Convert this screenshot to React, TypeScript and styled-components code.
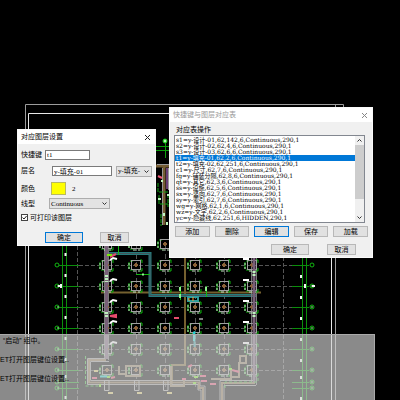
import React, { useState } from "react";
import styled, { createGlobalStyle } from "styled-components";

const GlobalStyle = createGlobalStyle`
  * { box-sizing: border-box; }
  body {
    margin: 0;
    background: #000;
    color: #000;
    font: 7px/8px "Liberation Serif", "Noto Sans CJK SC", serif;
  }
  button, input, select { font: inherit; color: inherit; margin: 0; }
`;

const Desktop = styled.main`
  position: relative;
  min-height: 100vh;
  overflow: hidden;
  background: #000;
`;

const Drawing = styled.svg`
  position: absolute;
  left: 0;
  top: 0;
`;

const CommandLog = styled.section`
  position: absolute;
  left: 0;
  right: 25px;
  top: 334px;
  bottom: 0;
  overflow: hidden;
  display: flex;
  flex-direction: column;
  gap: 11px;
  padding-top: 2px;
  background: rgba(209, 209, 209, 0.66);
  border-top: 1px solid #aaa;
  border-right: 1px solid #aaa;
  color: #000;
  font-family: "Liberation Sans", "Noto Sans CJK SC", sans-serif;
`;

const LogLine = styled.p<{ $indent?: boolean }>`
  margin: 0;
  padding-left: ${(p) => (p.$indent ? 3 : 0)}px;
  white-space: pre;
`;

const Window = styled.section<{ $x: number; $y: number; $width: number }>`
  position: absolute;
  left: ${(p) => p.$x}px;
  top: ${(p) => p.$y}px;
  width: ${(p) => p.$width}px;
  background: #f0f0f0;
  border: 1px solid #fafafa;
`;

const TitleBar = styled.header<{ $inactive?: boolean }>`
  display: flex;
  align-items: center;
  justify-content: space-between;
  height: 14px;
  padding: 0 4px 0 3px;
  background: #fff;
  color: ${(p) => (p.$inactive ? "#999" : "#000")};
`;

const Title = styled.h1`
  margin: 0;
  font-size: 7px;
  font-weight: 400;
`;

const CloseButton = styled.button`
  display: flex;
  padding: 0;
  border: 0;
  background: none;
`;

const Form = styled.form`
  display: flex;
  flex-direction: column;
  padding: 6px 4px 2px 3px;
`;

const Field = styled.div<{ $labelWidth: number; $height: number }>`
  display: grid;
  grid-template-columns: ${(p) => p.$labelWidth}px 1fr;
  align-items: center;
  height: ${(p) => p.$height}px;
`;

const Controls = styled.div`
  display: flex;
  align-items: center;
  gap: 4px;
`;

const TextBox = styled.input<{ $width: number }>`
  width: ${(p) => p.$width}px;
  height: 10px;
  padding: 0 1px;
  border: 1px solid #7a7a7a;
  background: #fff;
`;

const SelectFrame = styled.span<{ $width: number }>`
  position: relative;
  display: flex;
  width: ${(p) => p.$width}px;
  svg { position: absolute; right: 3px; top: 3px; pointer-events: none; }
`;

const Select = styled.select`
  width: 100%;
  height: 11px;
  padding: 0 8px 0 1px;
  appearance: none;
  border: 1px solid #adadad;
  border-radius: 0;
  background: #e3e3e3;
`;

const Swatch = styled.button`
  width: 15px;
  height: 13px;
  padding: 0;
  border: 1px solid #b9b960;
  background: #ff0;
`;

const ColorIndex = styled.output`
  padding-left: 2px;
`;

const CheckRow = styled.label`
  display: flex;
  align-items: center;
  gap: 2px;
  height: 11px;
`;

const CheckFrame = styled.span`
  position: relative;
  display: flex;
  svg { position: absolute; left: 1px; top: 1px; pointer-events: none; visibility: hidden; }
  input:checked + svg { visibility: visible; }
`;

const CheckBox = styled.input`
  appearance: none;
  width: 7px;
  height: 7px;
  border: 1px solid #444;
  background: #fff;
`;

const Button = styled.button<{ $default?: boolean }>`
  height: 11px;
  padding: 0;
  line-height: 8px;
  border: 1px solid ${(p) => (p.$default ? "#0078d7" : "#b8b8b8")};
  background: #e1e1e1;
`;

const Footer = styled.div<{ $columns: string; $gap: number }>`
  display: grid;
  grid-template-columns: ${(p) => p.$columns};
  column-gap: ${(p) => p.$gap}px;
  justify-content: end;
`;

const SettingsFooter = styled(Footer)`
  padding: 9px 22px 0 0;
`;

const MappingBody = styled.div`
  padding: 4px 4px 2px;
`;

const GroupTitle = styled.h2`
  margin: 0;
  padding: 0 0 1px 2px;
  font-size: 7px;
  font-weight: 400;
`;

const ListFrame = styled.div`
  display: grid;
  grid-template-columns: 1fr 9px;
  grid-template-rows: minmax(0, 1fr);
  height: 88px;
  margin-right: 3px;
  border: 1px solid #828790;
  background: #fff;
`;

const List = styled.ul`
  display: grid;
  grid-template-rows: repeat(14, 6px);
  align-content: center;
  min-height: 0;
  margin: 0;
  padding: 0;
  font: 6px/6px "DejaVu Serif", "Noto Sans CJK SC", serif;
  list-style: none;
`;

const Entry = styled.li<{ $selected: boolean }>`
  padding-left: 1px;
  white-space: nowrap;
  color: ${(p) => (p.$selected ? "#fff" : "#000")};
  background: ${(p) => (p.$selected ? "#0078d7" : "transparent")};
  cursor: default;
`;

const ScrollBar = styled.div`
  display: grid;
  grid-template-rows: 9px 54px 1fr 9px;
  background: #f0f0f0;
`;

const ScrollButton = styled.button`
  display: flex;
  align-items: center;
  justify-content: center;
  padding: 0;
  border: 0;
  background: none;
`;

const Thumb = styled.div`
  background: #cdcdcd;
`;

const Actions = styled.div`
  display: grid;
  grid-template-columns: repeat(5, 1fr);
  gap: 5px;
  padding: 3px 0 7px 1px;
`;

const MappingFooter = styled(Footer)`
  padding-right: 12px;
`;

const Cross = ({ color }: { color: string }) => (
  <svg width="7" height="7" viewBox="0 0 7 7" stroke={color} aria-hidden="true">
    <path d="M1 1 6 6M6 1 1 6" />
  </svg>
);

const Chevron = ({ up }: { up?: boolean }) => (
  <svg width="5" height="5" viewBox="0 0 5 5" fill="none" stroke="#333" aria-hidden="true">
    <path d={up ? "M.5 3.5 2.5 1.5 4.5 3.5" : "M.5 1.5 2.5 3.5 4.5 1.5"} />
  </svg>
);

const Tick = () => (
  <svg width="5" height="5" viewBox="0 0 5 5" fill="none" stroke="#222" aria-hidden="true">
    <path d="M.5 2.5 2 4 4.6 1" />
  </svg>
);

const entries = [
  "s1=y-设计-01,62,142,6,Continuous,290,1",
  "s2=y-设计-02,62,4,6,Continuous,290,1",
  "s3=y-设计-03,62,6,6,Continuous,290,1",
  "t1=y-填充-01,62,2,6,Continuous,290,1",
  "t2=y-填充-02,62,251,6,Continuous,290,1",
  "c1=y-尺寸,62,7,6,Continuous,290,1",
  "fg=y-铺装分隔,62,8,6,Continuous,290,1",
  "qt=y-其它,62,3,6,Continuous,290,1",
  "ss=y-设施,62,5,6,Continuous,290,1",
  "sx=y-竖向,62,7,6,Continuous,290,1",
  "sy=y-索引,62,7,6,Continuous,290,1",
  "wg=y-网格,62,1,6,Continuous,290,1",
  "wz=y-文字,62,2,6,Continuous,290,1",
  "yc=y-隐藏线,62,251,6,HIDDEN,290,1",
];

const axisY = [265, 286, 307, 328, 349, 370, 382, 388];
const bayY = [244, 265, 286, 307, 328, 349, 370];
const bayX = [107, 136, 165, 195, 224, 252];
const tickY = [254, 275, 296, 317, 338, 359, 376, 397];

const Footing = ({ x, y }: { x: number; y: number }) => (
  <g transform={`translate(${x} ${y})`} fill="none">
    <path d="M-7 -3V4M-6 -4H-3M-6 5H-3M4 -5H6V-2M4 6H6V3" stroke="#0db80d" />
    <path d="M-7 -2V0M-7 2V4M-3 6H0M2 6H4" stroke="#c8f0c8" />
    <rect x="-4.5" y="-4.5" width="9" height="9" stroke="#a0a0a0" />
    <path d="M-2 0H2M0 -2V2" stroke="#8b6238" strokeWidth="2" />
  </g>
);

const FloorPlan = () => (
  <Drawing width="400" height="400" viewBox="0 0 400 400" fill="none" aria-hidden="true">
    <path d="M25.5 400V104.5H343.5V108M335.5 104V400" stroke="#9c9c9c" />
    <path d="M28.5 400V113.5H331.5V400" stroke="#e8e8e8" />
    <g stroke="#555" strokeDasharray="4 2">
      {axisY.slice(0, 6).map((y) => <path key={y} d={`M79 ${y}.5H293`} />)}
      <path d="M77.5 246V400M283.5 257V400" />
      {bayX.slice(1, 5).map((x) => <path key={x} d={`M${x}.5 246V390`} strokeDasharray="5 3" />)}
    </g>
    <g stroke="#0b8e0b">
      <path d="M62.5 246V400M66.5 246V400M302.5 257V400M306.5 257V400" />
      {axisY.map((y) => (
        <g key={y}>
          <path d={`M59 ${y}.5H79M292 ${y}.5H309`} />
          <circle cx="57" cy={y} r="2" stroke="#12b812" />
          <circle cx="312" cy={y} r="2" stroke="#12b812" />
          {y > 265 && <path d={`M57 ${y}H59M311 ${y}H313`} stroke="#a8eca8" />}
        </g>
      ))}
    </g>
    <g stroke="#f4f4f4" strokeWidth="2">
      {tickY.map((y) => <path key={y} d={`M65.5 ${y - 1}V${y + 2}M301 ${y}V${y + 3}`} />)}
      <path d="M58 286H62M61 284V288M312 286H315M305 284V288" />
    </g>

    <path d="M101 292.5H261M185 257V365H172V384" stroke="#75602f" strokeWidth="2" />
    <path d="M107 253.5H150V295.5H256" stroke="#267b7d" strokeWidth="3" />
    <path d="M107 253.5H150V295.5H256" stroke="#42555a" />
    <path d="M104.5 246V358M108.5 246V360M251.5 257V384M256.5 257V385" stroke="#777" />
    {bayY.map((y) => bayX.map((x) => <Footing key={`${x}-${y}`} x={x} y={y} />))}
    <path d="M106.5 246V359M254 257V383" stroke="#775f77" strokeWidth="3" />
    <path d="M106.5 275V282M106.5 312V318M254 271V276M254 312V318" stroke="#bdf1bd" strokeWidth="3" strokeDasharray="2 1" />
    <g stroke="#fff">
      {[259, 280, 301, 322, 343].map((y) => (
        <path key={y} d={`M110 ${y + 1}L113 ${y - 1}L117 ${y}M243 ${y}H249`} strokeWidth="2" />
      ))}
      <path d="M199 319H203" />
    </g>
    <path d="M110 257L116 254M110 316L116 315V317ZM174 318H179" stroke="#e64c6d" strokeWidth="2" />
    <path d="M118.5 246V255M136 274.5H150M180.5 286V300M206.5 286V297" stroke="#12b912" />
    <path d="M180 287V291M180 294V298M206 287V291M142 274.5H144" stroke="#8ff08f" strokeWidth="2" />
    <path d="M107 255H112" stroke="#79e90b" strokeWidth="2" />
    <path d="M194.5 331V347M188 297H198V301H188Z" stroke="#2e9b9b" strokeWidth="2" />
    <path d="M189 301V298M193 301V297" stroke="#ff9c32" />

    <g stroke="#9a9a9a">
      <path d="M105 358.5H87.5V384.5H198V390H201V400M109 361.5H90.5V380.5H200V386H205V400" />
      <path d="M256 385.5H224V400M253 380.5H220V400" />
    </g>
    <path d="M106 360H89V382.5H199V388H203V400M255 383H222V400" stroke="#8a744f" strokeWidth="2" />
    <path d="M85.5 356V386H101M225 388V382H258V378" stroke="#34ba34" strokeDasharray="3 2" />
    <path d="M119 366V374H125M126 366H140V376H126ZM171 366V386H184V378M231 368V377H239V363H246V356H240V362M211 379H232" stroke="#8f7f60" strokeWidth="2" />
    <path d="M100 376.5H109M194 332V341" stroke="#20d4d4" strokeWidth="2" />
    <path d="M92 378H97M111 378L115 377M188 367L192 365M200 376H206M201 381H207M210 384H216M232 370L239 372M182 379H186" stroke="#e34e72" strokeWidth="2" />
    <path d="M94 371H98M108 393H113M137 393H142M167 393H172" stroke="#dcca6c" strokeWidth="2" />
    <path d="M194 377H198M229 369H232M107 377H110M100 384V387M193 383H196" stroke="#7cea21" strokeWidth="2" />
    <g stroke="#aaa">
      {[106, 136, 165].map((x) => <path key={x} d={`M${x - 2}.5 380.5H${x + 3}V390.5H${x - 2}.5Z`} />)}
    </g>

    <path d="M165.5 142V158M156 146.5H169M156 150.5H169" stroke="#0b9d0b" />
    <circle cx="165" cy="141" r="2" fill="#b8f7b8" stroke="#0ac80a" />
    <path d="M156 166H169M164 166V225" stroke="#765d34" strokeWidth="3" />
    <path d="M157 164.5H169M162.5 168V225M168.5 168V190" stroke="#999" />
    <path d="M167 168V189" stroke="#694076" strokeWidth="2" />
    <path d="M158 176L162 178" stroke="#f05977" strokeWidth="2" />
    <path d="M158 183V192H168M159 195V204H168M161 214V226M168 194V207" stroke="#12a512" strokeDasharray="4 1" />
    <path d="M161 181H163M158 199H161M167 195H169M164 213V216M167 222V225" stroke="#c2f8c2" strokeWidth="2" />
  </Drawing>
);

export default function App() {
  const [selected, setSelected] = useState(3);
  return (
    <>
      <GlobalStyle />
      <Desktop>
        <FloorPlan />
        <CommandLog aria-label="命令行">
          <LogLine $indent>“启动” 组中。</LogLine>
          <LogLine>ET打开图层键位设置..</LogLine>
          <LogLine>ET打开图层键位设置..</LogLine>
        </CommandLog>

        <Window $x={169} $y={107} $width={204} aria-labelledby="mapping-title">
          <TitleBar $inactive>
            <Title id="mapping-title">快捷键与图层对应表</Title>
            <CloseButton aria-label="关闭"><Cross color="#888" /></CloseButton>
          </TitleBar>
          <MappingBody>
            <GroupTitle id="mapping-list">对应表操作</GroupTitle>
            <ListFrame>
              <List role="listbox" aria-labelledby="mapping-list">
                {entries.map((entry, i) => (
                  <Entry
                    key={entry}
                    role="option"
                    aria-selected={i === selected}
                    $selected={i === selected}
                    onClick={() => setSelected(i)}
                  >
                    {entry}
                  </Entry>
                ))}
              </List>
              <ScrollBar>
                <ScrollButton aria-label="向上滚动"><Chevron up /></ScrollButton>
                <Thumb />
                <span />
                <ScrollButton aria-label="向下滚动"><Chevron /></ScrollButton>
              </ScrollBar>
            </ListFrame>
            <Actions>
              <Button>添加</Button>
              <Button>删除</Button>
              <Button $default>编辑</Button>
              <Button>保存</Button>
              <Button>加载</Button>
            </Actions>
            <MappingFooter $columns="38px 29px" $gap={18}>
              <Button>确定</Button>
              <Button>取消</Button>
            </MappingFooter>
          </MappingBody>
        </Window>

        <Window $x={17} $y={129} $width={139} aria-labelledby="settings-title">
          <TitleBar>
            <Title id="settings-title">对应图层设置</Title>
            <CloseButton aria-label="关闭"><Cross color="#222" /></CloseButton>
          </TitleBar>
          <Form onSubmit={(e) => e.preventDefault()}>
            <Field $labelWidth={24} $height={10}>
              <label htmlFor="shortcut">快捷键</label>
              <TextBox id="shortcut" $width={45} defaultValue="t1" />
            </Field>
            <Field $labelWidth={31} $height={22}>
              <label htmlFor="layer">层名</label>
              <Controls>
                <TextBox id="layer" $width={60} defaultValue="y-填充-01" />
                <SelectFrame $width={36}>
                  <Select aria-label="图层">
                    <option>y-填充-</option>
                  </Select>
                  <Chevron />
                </SelectFrame>
              </Controls>
            </Field>
            <Field $labelWidth={30} $height={13}>
              <label htmlFor="color">颜色</label>
              <Controls>
                <Swatch id="color" type="button" />
                <ColorIndex htmlFor="color">2</ColorIndex>
              </Controls>
            </Field>
            <Field $labelWidth={28} $height={17}>
              <label htmlFor="linetype">线型</label>
              <SelectFrame $width={61}>
                <Select id="linetype">
                  <option>Continuous</option>
                </Select>
                <Chevron />
              </SelectFrame>
            </Field>
            <CheckRow>
              <CheckFrame>
                <CheckBox type="checkbox" defaultChecked />
                <Tick />
              </CheckFrame>
              可打印该图层
            </CheckRow>
            <SettingsFooter $columns="38px 29px" $gap={17}>
              <Button $default type="submit">确定</Button>
              <Button type="button">取消</Button>
            </SettingsFooter>
          </Form>
        </Window>
      </Desktop>
    </>
  );
}
